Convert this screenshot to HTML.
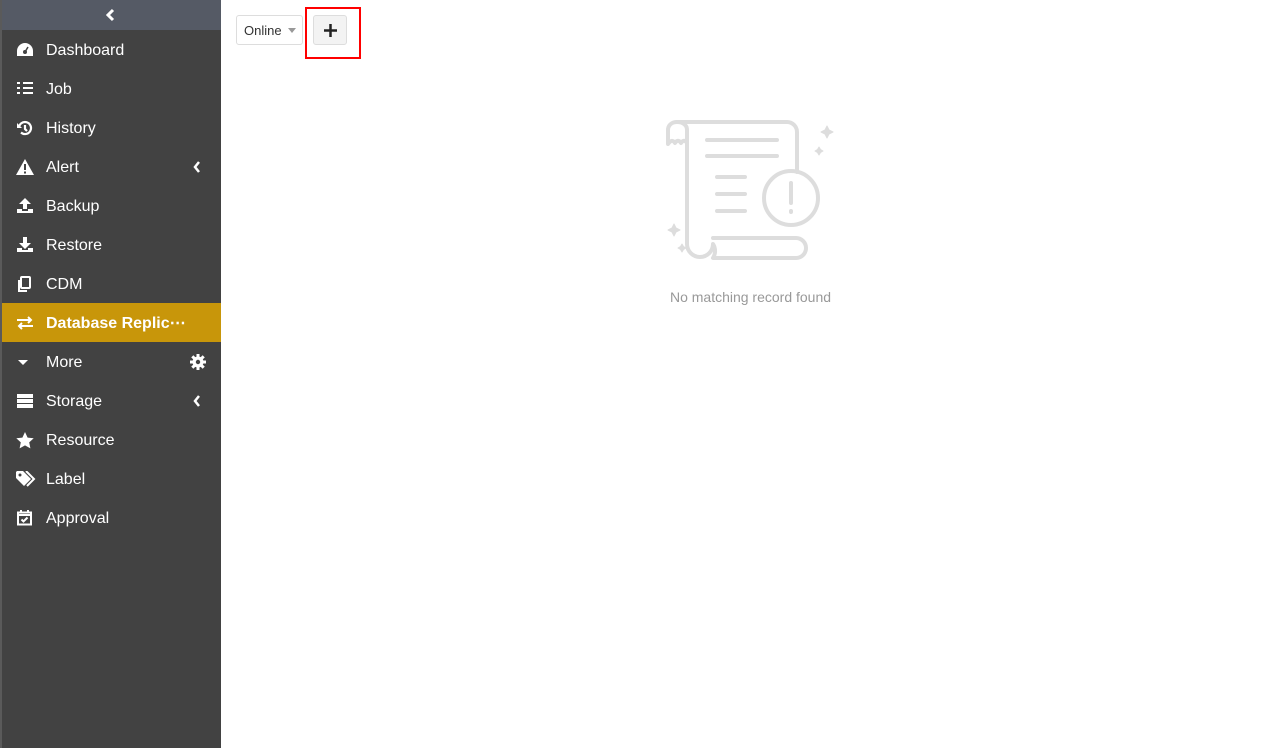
<!DOCTYPE html>
<html><head><style>
*{margin:0;padding:0;box-sizing:border-box}
body{width:1279px;height:748px;background:#fff;font-family:"Liberation Sans",sans-serif;position:relative;overflow:hidden}
.sb{position:absolute;left:0;top:0;width:221px;height:748px;background:#424242;border-left:2px solid #5a5a5a}
.top{height:30px;background:#555a65;position:relative}
.item{height:39px;position:relative;color:#fff;font-size:16px;line-height:41px}
.item .t{position:absolute;left:44px}
.item svg{position:absolute;left:14px;top:12px}
.item.act{background:#c8960a;font-weight:bold}
.item svg.ch{position:absolute;left:191px;top:14px}
</style></head><body>
<div class="sb">
<div class="top"><svg style="position:absolute;left:104px;top:8px" width="10" height="14" viewBox="0 0 10 14"><path d="M7 2L2 7l5 5" stroke="#fff" stroke-width="3" fill="none"/></svg></div>
<div class="item"><svg width="18" height="15" viewBox="0 0 18 15"><path d="M9 1a8 8 0 0 0-8 8v5h16V9a8 8 0 0 0-8-8z" fill="#fff"/><circle cx="9" cy="10" r="2" fill="#424242"/><path d="M9 10l3-5" stroke="#424242" stroke-width="1.5"/></svg><span class="t">Dashboard</span></div>
<div class="item"><svg width="18" height="15" viewBox="0 0 18 15"><path d="M1 2h3M1 7h3M1 12h3M7 2h10M7 7h10M7 12h10" stroke="#fff" stroke-width="2"/></svg><span class="t">Job</span></div>
<div class="item"><svg width="18" height="16" viewBox="0 0 18 16"><path d="M3 8a6 6 0 1 1 2 4.5M9 5v4l2 2" stroke="#fff" stroke-width="2.2" fill="none"/><path d="M1 3v5h5z" fill="#fff"/></svg><span class="t">History</span></div>
<div class="item"><svg width="18" height="16" viewBox="0 0 18 16"><path d="M9 0l9 16H0z" fill="#fff"/><path d="M9 5v6M9 12.5v2" stroke="#424242" stroke-width="2"/></svg><span class="t">Alert</span><svg class="ch" width="8" height="12" viewBox="0 0 8 12"><path d="M6 1L2 6l4 5" stroke="#fff" stroke-width="2.5" fill="none"/></svg></div>
<div class="item"><svg width="18" height="16" viewBox="0 0 18 16"><path d="M9 0l6 6h-4v5H7V6H3z M1 11h5v2h6v-2h5v4H1z" fill="#fff"/></svg><span class="t">Backup</span></div>
<div class="item"><svg width="18" height="16" viewBox="0 0 18 16"><path d="M7 0h4v6h4l-6 6-6-6h4z M1 11h5v2h6v-2h5v4H1z" fill="#fff"/></svg><span class="t">Restore</span></div>
<div class="item"><svg width="18" height="16" viewBox="0 0 18 16"><rect x="5" y="1" width="9" height="11" rx="1" stroke="#fff" stroke-width="2" fill="none"/><path d="M3 4v11h8" stroke="#fff" stroke-width="2" fill="none"/></svg><span class="t">CDM</span></div>
<div class="item act"><svg width="18" height="16" viewBox="0 0 18 16"><path d="M1 5h14M12 2l3 3-3 3M17 11H3M6 8l-3 3 3 3" stroke="#fff" stroke-width="2" fill="none"/></svg><span class="t">Database Replic⋯</span></div>
<div class="item"><svg width="18" height="16" viewBox="0 0 18 16"><path d="M2 6h10l-5 5z" fill="#fff"/></svg><span class="t">More</span><svg style="position:absolute;left:188px;top:12px" width="16" height="16" viewBox="0 0 16 16"><circle cx="8" cy="8" r="5.5" fill="#fff"/><path d="M8 0v16M0 8h16M2.3 2.3l11.4 11.4M13.7 2.3L2.3 13.7" stroke="#fff" stroke-width="3"/><circle cx="8" cy="8" r="2.2" fill="#424242"/></svg></div>
<div class="item"><svg width="18" height="16" viewBox="0 0 18 16"><rect x="1" y="1" width="16" height="4" fill="#fff"/><rect x="1" y="6" width="16" height="4" fill="#fff"/><rect x="1" y="11" width="16" height="4" fill="#fff"/></svg><span class="t">Storage</span><svg class="ch" width="8" height="12" viewBox="0 0 8 12"><path d="M6 1L2 6l4 5" stroke="#fff" stroke-width="2.5" fill="none"/></svg></div>
<div class="item"><svg width="18" height="17" viewBox="0 0 18 17"><path d="M9 0l2.6 5.6 6.1.7-4.5 4.1 1.2 6L9 13.4 3.6 16.4l1.2-6L.3 6.3l6.1-.7z" fill="#fff"/></svg><span class="t">Resource</span></div>
<div class="item"><svg width="20" height="16" viewBox="0 0 20 16"><path d="M0 1v6l8 8 7-7-8-8H1z" fill="#fff"/><path d="M10 0l8 8-7 7" stroke="#fff" stroke-width="2" fill="none"/><circle cx="4" cy="4" r="1.5" fill="#424242"/></svg><span class="t">Label</span></div>
<div class="item"><svg width="18" height="16" viewBox="0 0 18 16"><rect x="2" y="2.5" width="13" height="12" stroke="#fff" stroke-width="2" fill="none"/><path d="M2 5h13M5 0v3M12 0v3M5.5 9.5l2 2 4-4" stroke="#fff" stroke-width="2" fill="none"/></svg><span class="t">Approval</span></div>
</div>
<div style="position:absolute;left:236px;top:15px;width:67px;height:30px;border:1px solid #ddd;border-radius:3px;font-size:13px;line-height:29px;padding-left:7px;color:#333">Online<span style="position:absolute;left:51px;top:12px;border-left:4px solid transparent;border-right:4px solid transparent;border-top:5px solid #999"></span></div>
<div style="position:absolute;left:313px;top:15px;width:34px;height:30px;border:1px solid #ddd;border-radius:3px;background:#f3f3f3"><svg style="position:absolute;left:10px;top:8px" width="13" height="13" viewBox="0 0 13 13"><path d="M6.5 0v13M0 6.5h13" stroke="#222" stroke-width="2.5"/></svg></div>
<div style="position:absolute;left:305px;top:7px;width:56px;height:52px;border:2px solid #f00"></div>
<svg style="position:absolute;left:665px;top:118px" width="172" height="146" viewBox="0 0 172 146" fill="none" stroke="#ddd" stroke-width="4" stroke-linecap="round" stroke-linejoin="round">
<path d="M12 4h110a10 10 0 0 1 10 10v40"/>
<path d="M12 4c-5 0-9 3-9 8v14c3-4 5-4 7-1 2-3 4-3 6 0 2-3 4-3 6 0V12c0-5-4-8-10-8"/>
<path d="M22 26v100a13 13 0 0 0 26 0 13 13 0 0 1 0 14h83a10 10 0 0 0 0-20H48"/>
<path d="M42 22h70M42 38h70M52 59h28M52 76h28M52 93h28"/>
<circle cx="126" cy="80" r="27"/>
<path d="M126 65v20M126 93v1"/>
<path d="M162 8l2 4 4 2-4 2-2 4-2-4-4-2 4-2zM154 29l1.5 2.5L158 33l-2.5 1.5L154 37l-1.5-2.5L150 33l2.5-1.5zM9 106l2 4 4 2-4 2-2 4-2-4-4-2 4-2zM17 126l1.5 2.5 2.5 1.5-2.5 1.5-1.5 2.5-1.5-2.5-2.5-1.5 2.5-1.5z" fill="#ddd" stroke-width="1"/>
</svg>
<div style="position:absolute;left:600px;top:289px;width:301px;text-align:center;font-size:14px;color:#999">No matching record found</div>
</body></html>
